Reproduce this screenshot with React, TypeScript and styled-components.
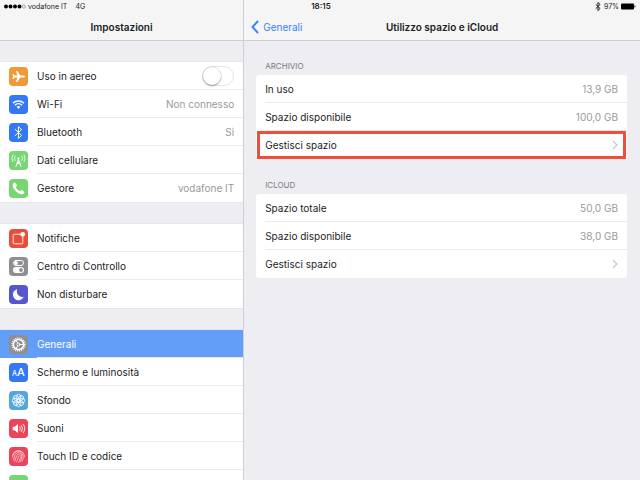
import React from "react";
import styled, { createGlobalStyle, css } from "styled-components";

const GlobalStyle = createGlobalStyle`
  *, *::before, *::after { box-sizing: border-box; }
  body {
    margin: 0;
    background: #eeedf2;
    color: #1c1c1e;
    font: 10px/14px Inter, "Liberation Sans", sans-serif;
  }
  h1, h2, ul { margin: 0; padding: 0; font: inherit; list-style: none; }
  button { border: 0; margin: 0; padding: 0; background: none; color: inherit; font: inherit; text-align: left; }
`;

const Screen = styled.div`
  display: grid;
  grid-template-columns: 38% 1fr;
  height: 100vh;
  overflow: hidden;
`;

const Pane = styled.div`
  min-width: 0;
  overflow: hidden;
`;

const Detail = styled(Pane)`
  border-left: 1px solid #cfced3;
`;

const TopBar = styled.header`
  height: 41px;
  background: #f5f5f6;
  border-bottom: 1px solid #cfcfd2;
`;

const StatusLine = styled.div`
  display: flex;
  align-items: center;
  height: 13px;
  padding: 0 4px;
  font-size: 7px;
  line-height: 13px;
`;

const Signal = styled.svg`
  width: 22px;
  height: 5px;
  margin-right: 2px;
`;

const Network = styled.span`
  margin-left: 8px;
`;

const Clock = styled.time`
  flex: 1;
  padding-left: 63px;
  font-size: 8px;
  font-weight: 600;
`;

const StatusIcon = styled.svg<{ $width: number }>`
  flex: none;
  width: ${(p) => p.$width}px;
  height: 9px;
`;

const Percent = styled.span`
  margin: 0 2px 0 3px;
`;

const TitleRow = styled.div`
  display: grid;
  grid-template-columns: 64px 1fr 64px;
  align-items: center;
  height: 27px;
`;

const SideTitleRow = styled(TitleRow)`
  grid-template-columns: 1fr;
`;

const Title = styled.h1`
  font-weight: 600;
  text-align: center;
  white-space: nowrap;
`;

const BackLink = styled.a`
  display: flex;
  align-items: center;
  gap: 4px;
  padding-left: 7px;
  color: #3c82f6;
  text-decoration: none;
`;

const SideList = styled.nav`
  display: grid;
  gap: 22px;
  padding-top: 21px;
`;

const SideGroup = styled.ul`
  background: #fff;
  box-shadow: 0 0 0 1px #e6e5ea;
`;

const SideRow = styled.li<{ $selected?: boolean }>`
  display: flex;
  align-items: center;
  height: 28px;
  padding-left: 9px;
  gap: 9px;
  ${(p) =>
    p.$selected &&
    css`
      background: #629ef7;
      color: #fff;
    `}
`;

const RowBody = styled.div`
  display: flex;
  flex: 1;
  align-items: center;
  justify-content: space-between;
  height: 28px;
  padding-right: 9px;
  border-bottom: 1px solid #ebebed;
  ${SideRow}:last-child > & { border-bottom-color: transparent; }
`;

const RowButton = styled(RowBody).attrs({ as: "button" })``;

const Value = styled.span`
  color: #99999d;
`;

const IconTile = styled.svg<{ $color: string }>`
  flex: none;
  width: 19px;
  height: 19px;
  border-radius: 4px;
  background: ${(p) => p.$color};
  fill: none;
  stroke: #fff;
  stroke-linecap: round;
  stroke-linejoin: round;
`;

const Switch = styled.input`
  appearance: none;
  display: flex;
  align-items: center;
  width: 32px;
  height: 20px;
  margin: 0;
  border: 1px solid #e3e3e5;
  border-radius: 10px;
  background: #fff;

  &::before {
    content: "";
    width: 18px;
    height: 18px;
    border-radius: 50%;
    background: #fff;
    box-shadow: 0 1px 2px #0005, 0 0 1px #0004;
  }
  &:checked { justify-content: flex-end; background: #76d672; }
`;

const Content = styled.main`
  display: grid;
  gap: 19px;
  padding: 18px 13px 18px 12px;
`;

const SectionTitle = styled.h2`
  padding: 0 9px 2px;
  color: #7b7b80;
  font-size: 8px;
`;

const Card = styled.ul`
  background: #fff;
  border-radius: 3px;
`;

const CardRow = styled.li<{ $marked?: boolean }>`
  position: relative;
  padding-left: 9px;
  ${(p) =>
    p.$marked &&
    css`
      &::after {
        content: "";
        position: absolute;
        inset: 0 1px;
        border: 3px solid #ed4f3c;
        pointer-events: none;
      }
    `}
`;

const CardLine = styled.div`
  display: flex;
  align-items: center;
  justify-content: space-between;
  width: 100%;
  height: 28px;
  padding-right: 9px;
  border-bottom: 1px solid #ebebed;
`;

const CardButton = styled(CardLine).attrs({ as: "button" })`
  border-bottom-color: transparent;
`;

const Chevron = () => (
  <svg width="6" height="10" viewBox="0 0 6 10" fill="none" stroke="#c9c9ce" strokeWidth="1.3" aria-hidden="true">
    <path d="M1 1l4 4-4 4" />
  </svg>
);

const BT_PATH = "M6.2 6.4l6.4 6-3.2 3V3.6l3.2 3-6.4 6";

const glyphs: Record<string, React.ReactNode> = {
  plane: (
    <path
      fill="#fff"
      stroke="none"
      d="M16 9.5c0 .7-.8 1.1-1.7 1.1h-3L8.3 15H7l1.4-4.4H5.6l-1.2 1.5h-1l.7-2.6-.7-2.6h1l1.2 1.5h2.8L7 4h1.3l3 4.4h3c.9 0 1.7.4 1.7 1.1z"
    />
  ),
  wifi: (
    <>
      <path strokeWidth="1.4" strokeLinecap="butt" d="M4 8.2a8 8 0 0 1 11 0M5.9 10.2a5.3 5.3 0 0 1 7.2 0" />
      <path fill="#fff" stroke="none" d="M7.5 11.8a3 3 0 0 1 4 0l-2 2.2z" />
    </>
  ),
  bluetooth: <path d={BT_PATH} />,
  antenna: (
    <>
      <path strokeWidth="1" d="M9.5 8L6.9 15.5M9.5 8l2.6 7.5M8.5 11.3l3.2 2.8M10.5 11.3l-3.2 2.8M8.3 11.2h2.4" />
      <circle cx="9.5" cy="7.3" r="1.1" fill="#fff" stroke="none" />
      <path
        strokeWidth="0.8"
        d="M6.1 5a4 4 0 0 0 0 4.6M12.9 5a4 4 0 0 1 0 4.6M3.9 3.8a6.5 6.5 0 0 0 0 7M15.1 3.8a6.5 6.5 0 0 1 0 7"
      />
    </>
  ),
  phone: (
    <path
      fill="#fff"
      stroke="none"
      d="M3.8 5.4c.3-.9 1.1-1.8 1.9-1.8.7 0 2.2 2.1 2.2 2.9 0 .8-1.2 1.1-1 1.7.4 1.4 2.4 3.4 3.9 3.9.7.2.9-1 1.7-1 .8 0 2.9 1.5 2.9 2.2 0 .8-.9 1.7-1.9 1.9-3.9.8-10.6-5.8-9.7-9.8z"
    />
  ),
  notify: (
    <>
      <path strokeWidth="0.9" d="M11.3 5.2H5.2a1 1 0 0 0-1 1v7.6a1 1 0 0 0 1 1h7.6a1 1 0 0 0 1-1V7.8" />
      <circle cx="13.7" cy="5.3" r="2.4" fill="#fff" stroke="none" />
    </>
  ),
  control: (
    <>
      <rect x="4.5" y="3.5" width="10" height="5" rx="2.5" />
      <circle cx="7" cy="6" r="1.9" fill="#fff" stroke="none" />
      <rect x="4" y="10" width="11" height="6" rx="3" fill="#fff" stroke="none" />
      <circle cx="12" cy="13" r="1.9" fill="#8e8e93" stroke="none" />
    </>
  ),
  moon: <path fill="#fff" stroke="none" d="M8.3 4.2a5.6 5.6 0 1 0 6.4 7.6 5.6 5.6 0 0 1-6.4-7.6z" />,
  gear: (
    <>
      <circle cx="9.5" cy="9.5" r="6.4" strokeWidth="1.4" strokeDasharray="1.1 .91" strokeLinecap="butt" />
      <circle cx="9.5" cy="9.5" r="5.1" strokeWidth="1.5" />
      <circle cx="9.5" cy="9.5" r="1.5" strokeWidth="0.9" />
      <path strokeWidth="1" d="M11 9.5h3.5M8.7 8.2L7 5.2M8.7 10.8L7 13.8" />
    </>
  ),
  letters: (
    <g fill="#fff" stroke="none" fontFamily="Inter, sans-serif" fontWeight="500">
      <text x="3" y="13" fontSize="7">A</text>
      <text x="8" y="13" fontSize="11">A</text>
    </g>
  ),
  flower: (
    <g strokeWidth="0.8">
      {[0, 45, 90, 135, 180, 225, 270, 315].map((angle) => (
        <circle key={angle} cx="9.5" cy="5.7" r="2.4" transform={`rotate(${angle} 9.5 9.5)`} />
      ))}
      <circle cx="9.5" cy="9.5" r="1.5" />
    </g>
  ),
  speaker: (
    <>
      <path fill="#fff" stroke="none" d="M3.7 7.8h2L9 5v9l-3.300-2.800h-2z" />
      <path strokeWidth="0.9" d="M10.800 7.800a3 3 0 0 1 0 3.400M12.500 6.500a5 5 0 0 1 0 6M14.200 5.200a7 7 0 0 1 0 8.600" />
    </>
  ),
  finger: (
    <path
      stroke="#ffc4cb"
      strokeWidth="0.9"
      d="M5 5.600a6 6 0 0 1 9 0M3.700 8a6 6 0 0 1 11.700 2M3.500 10.500c.4-9 10.800-7.600 10.600.5 0 1.200-.3 2.200-.8 3M4.500 13c1.700-3 .1-6.800 4.700-7.200 4.800 0 4 6.200 2.200 9M5.700 14.200C7.800 11 6.500 7.700 9.500 7.500c2.800.2 2 4.700.2 7.900M7.400 15c1.500-2 1.700-4 1.900-5.700"
    />
  ),
  battery: <path strokeWidth="3" d="M5 9.5h8" />,
};

type Item = { icon: string; color: string; label?: string; value?: string; toggle?: boolean; selected?: boolean };

const groups: Item[][] = [
  [
    { icon: "plane", color: "#f09a37", label: "Uso in aereo", toggle: true },
    { icon: "wifi", color: "#3478f6", label: "Wi-Fi", value: "Non connesso" },
    { icon: "bluetooth", color: "#3478f6", label: "Bluetooth", value: "Sì" },
    { icon: "antenna", color: "#76d672", label: "Dati cellulare" },
    { icon: "phone", color: "#76d672", label: "Gestore", value: "vodafone IT" },
  ],
  [
    { icon: "notify", color: "#eb4d3d", label: "Notifiche" },
    { icon: "control", color: "#8e8e93", label: "Centro di Controllo" },
    { icon: "moon", color: "#5756ce", label: "Non disturbare" },
  ],
  [
    { icon: "gear", color: "#8e8e93", label: "Generali", selected: true },
    { icon: "letters", color: "#3478f6", label: "Schermo e luminosità" },
    { icon: "flower", color: "#54a7db", label: "Sfondo" },
    { icon: "speaker", color: "#ea445a", label: "Suoni" },
    { icon: "finger", color: "#ea445a", label: "Touch ID e codice" },
    { icon: "battery", color: "#76d672" },
  ],
];

const sections = [
  {
    title: "ARCHIVIO",
    rows: [
      { label: "In uso", value: "13,9 GB" },
      { label: "Spazio disponibile", value: "100,0 GB" },
    ],
    marked: true,
  },
  {
    title: "ICLOUD",
    rows: [
      { label: "Spazio totale", value: "50,0 GB" },
      { label: "Spazio disponibile", value: "38,0 GB" },
    ],
    marked: false,
  },
];

function SettingsRow({ item }: { item: Item }) {
  const Body = item.toggle || !item.label ? RowBody : RowButton;
  return (
    <SideRow $selected={item.selected}>
      <IconTile $color={item.color} viewBox="0 0 19 19" aria-hidden="true">
        {glyphs[item.icon]}
      </IconTile>
      <Body>
        {item.toggle ? <label htmlFor="airplane">{item.label}</label> : <span>{item.label}</span>}
        {item.value && <Value>{item.value}</Value>}
        {item.toggle && <Switch id="airplane" type="checkbox" role="switch" />}
      </Body>
    </SideRow>
  );
}

export default function App() {
  return (
    <>
      <GlobalStyle />
      <Screen>
        <Pane>
          <TopBar>
            <StatusLine>
              <Signal viewBox="0 0 22 5" aria-hidden="true">
                {[2, 6.5, 11, 15.5].map((x) => (
                  <circle key={x} cx={x} cy="2.5" r="2" />
                ))}
                <circle cx="19.8" cy="2.5" r="1.6" fill="none" stroke="#555" strokeWidth="0.5" />
              </Signal>
              <span>vodafone IT</span>
              <Network>4G</Network>
            </StatusLine>
            <SideTitleRow>
              <Title>Impostazioni</Title>
            </SideTitleRow>
          </TopBar>
          <SideList>
            {groups.map((group, i) => (
              <SideGroup key={i}>
                {group.map((item) => (
                  <SettingsRow key={item.icon} item={item} />
                ))}
              </SideGroup>
            ))}
          </SideList>
        </Pane>
        <Detail>
          <TopBar>
            <StatusLine>
              <Clock>18:15</Clock>
              <StatusIcon
                $width={6}
                viewBox="5.5 3 8 13"
                fill="none"
                stroke="#222"
                strokeWidth="1.4"
                aria-hidden="true"
              >
                <path d={BT_PATH} />
              </StatusIcon>
              <Percent>97%</Percent>
              <StatusIcon $width={15} viewBox="0 0 15 9" aria-hidden="true">
                <rect x="0" y="1.5" width="13" height="6" rx="1" />
                <path d="M13.5 3.5a1 1 0 0 1 0 2z" />
              </StatusIcon>
            </StatusLine>
            <TitleRow>
              <BackLink href="#generali">
                <svg
                  width="8"
                  height="14"
                  viewBox="0 0 8 14"
                  fill="none"
                  stroke="currentColor"
                  strokeWidth="2"
                  aria-hidden="true"
                >
                  <path d="M7 1L1.5 7 7 13" />
                </svg>
                Generali
              </BackLink>
              <Title>Utilizzo spazio e iCloud</Title>
            </TitleRow>
          </TopBar>
          <Content>
            {sections.map((section) => (
              <section key={section.title}>
                <SectionTitle>{section.title}</SectionTitle>
                <Card>
                  {section.rows.map((row) => (
                    <CardRow key={row.label}>
                      <CardLine>
                        <span>{row.label}</span>
                        <Value>{row.value}</Value>
                      </CardLine>
                    </CardRow>
                  ))}
                  <CardRow $marked={section.marked}>
                    <CardButton>
                      Gestisci spazio
                      <Chevron />
                    </CardButton>
                  </CardRow>
                </Card>
              </section>
            ))}
          </Content>
        </Detail>
      </Screen>
    </>
  );
}
